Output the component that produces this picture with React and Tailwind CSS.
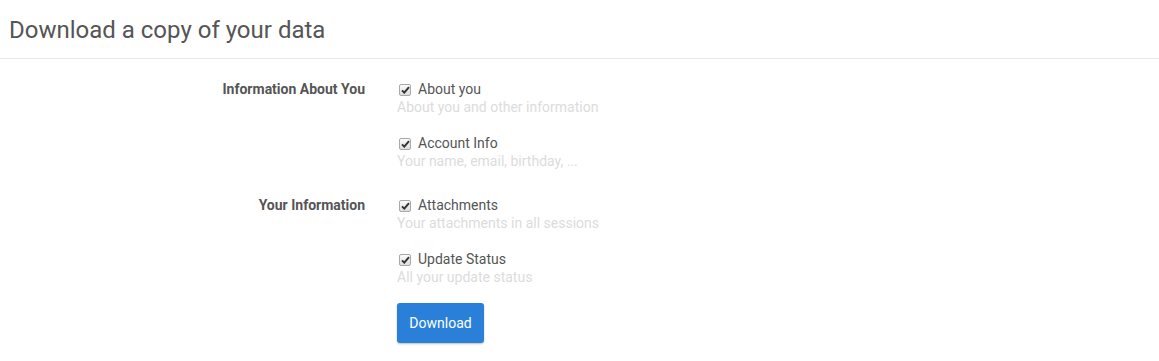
import React from 'react';

const sections = [
    {
        label: 'Information About You',
        items: [
            { title: 'About you', desc: 'About you and other information' },
            { title: 'Account Info', desc: 'Your name, email, birthday, ...' },
        ],
    },
    {
        label: 'Your Information',
        items: [
            { title: 'Attachments', desc: 'Your attachments in all sessions' },
            { title: 'Update Status', desc: 'All your update status' },
        ],
    },
];

const CheckBox = () => (
    <span className="w-[12px] h-[12px] mr-[7px] mt-[2px] rounded-[2px] border border-[#a8a8a8] bg-gradient-to-b from-[#fbfbfb] to-[#dedede] flex items-center justify-center shrink-0">
        <svg width="9" height="8" viewBox="0 0 9 8">
            <path d="M1 4.4 L3.3 6.6 L8 1.2" fill="none" stroke="#333" strokeWidth="2" />
        </svg>
    </span>
);

export default function App() {
    return (
        <div className="w-[1159px] h-[361px] bg-white text-[#555] font-['Roboto',_'Liberation_Sans',_sans-serif]">
            <div className="h-[59px] flex items-center px-[9px] border-b border-[#eaeaea]">
                <h1 className="text-[24px] leading-none text-[#555] pt-[1px]">Download a copy of your data</h1>
            </div>

            <div className="pt-[21px]">
                {sections.map((section) => (
                    <div key={section.label} className="flex mb-[8px]">
                        <div className="w-[365px] text-right text-[14px] leading-[18px] font-bold text-[#555]">
                            {section.label}
                        </div>
                        <div className="ml-[32px]">
                            {section.items.map((item) => (
                                <div key={item.title} className="mb-[18px]">
                                    <div className="flex items-center text-[14px] leading-[18px] pl-[2px]">
                                        <CheckBox />
                                        <span>{item.title}</span>
                                    </div>
                                    <div className="text-[14px] leading-[18px] text-[#dcdcdc]">{item.desc}</div>
                                </div>
                            ))}
                        </div>
                    </div>
                ))}
                <div className="ml-[397px] -mt-[9px]">
                    <button className="w-[87px] h-[40px] rounded-[3px] bg-[#2a80d8] text-white text-[14px] shadow-[0_1px_2px_rgba(0,0,0,0.25)]">
                        Download
                    </button>
                </div>
            </div>
        </div>
    );
}
